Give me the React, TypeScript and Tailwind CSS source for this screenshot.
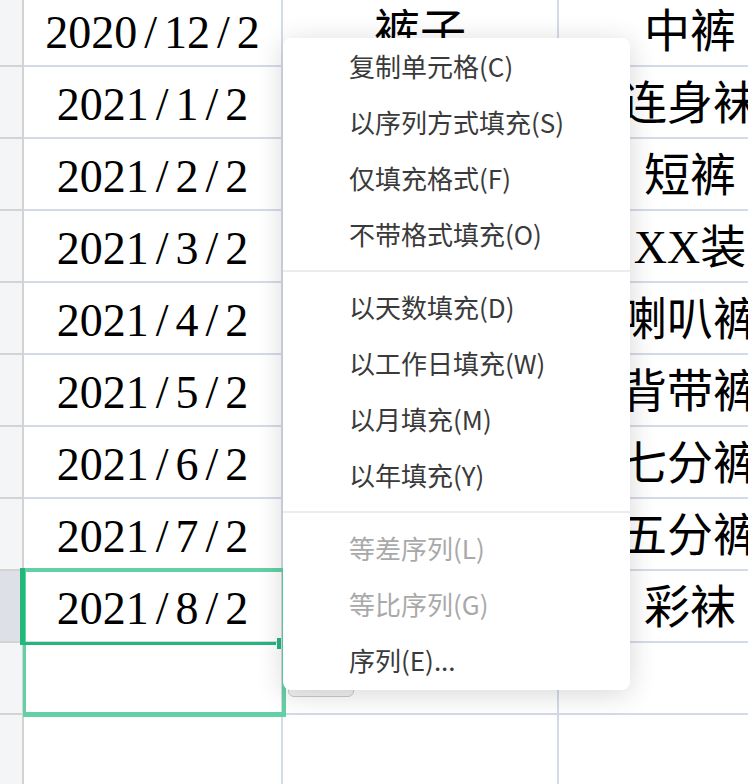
const rows = [
  ['2020/12/2', '裤子', '中裤'],
  ['2021/1/2', '', '连身袜'],
  ['2021/2/2', '', '短裤'],
  ['2021/3/2', '', 'XX装'],
  ['2021/4/2', '', '喇叭裤'],
  ['2021/5/2', '', '背带裤'],
  ['2021/6/2', '', '七分裤'],
  ['2021/7/2', '', '五分裤'],
  ['2021/8/2', '', '彩袜'],
  ['', '', ''],
  ['', '', ''],
]

const menu = [
  [
    { label: '复制单元格(C)' },
    { label: '以序列方式填充(S)' },
    { label: '仅填充格式(F)' },
    { label: '不带格式填充(O)' },
  ],
  [
    { label: '以天数填充(D)' },
    { label: '以工作日填充(W)' },
    { label: '以月填充(M)' },
    { label: '以年填充(Y)' },
  ],
  [
    { label: '等差序列(L)', disabled: true },
    { label: '等比序列(G)', disabled: true },
    { label: '序列(E)...' },
  ],
]

function DateText({ value }: { value: string }) {
  const parts = value.split('/')
  return (
    <span>
      {parts.map((p, i) => (
        <span key={i}>
          {i > 0 && <span className="px-[7px]">/</span>}
          {p}
        </span>
      ))}
    </span>
  )
}

function App() {
  return (
    <div className="relative h-[784px] w-[748px] overflow-hidden bg-white">
      {/* Sheet grid */}
      <div className="-mt-[5px] w-[821px] font-['Liberation_Serif','Noto_Sans_CJK_SC',serif] text-[46px] text-black">
        {rows.map((r, i) => (
          <div key={i} className="flex h-[72px]">
            <div
              className={`w-[24px] shrink-0 border-r-2 border-b-2 border-[#d3d3d3] ${
                i === 8 ? 'bg-[#dde0e7]' : 'bg-[#f4f5f7]'
              }`}
            />
            <div className="flex w-[259px] shrink-0 items-center justify-center border-r-2 border-b-2 border-[#d4dbe8] pt-[4px]">
              {r[0] && <DateText value={r[0]} />}
            </div>
            <div className="flex w-[276px] shrink-0 items-center justify-center border-r-2 border-b-2 border-[#d4dbe8] pt-[3px]">
              {r[1]}
            </div>
            <div className="flex w-[262px] shrink-0 items-center justify-center whitespace-nowrap border-b-2 border-[#d4dbe8] pt-[3px]">
              {r[2]}
            </div>
          </div>
        ))}
      </div>

      {/* Fill range and selected cell */}
      <div className="absolute left-[23px] top-[568px] h-[149px] w-[263px] border-t-[4px] border-r-[4px] border-b-[5px] border-l-[3px] border-[#63d0a5]" />
      <div className="absolute left-[20px] top-[568px] h-[77px] w-[5px] bg-[#22b87c]" />
      <div className="absolute left-[24px] top-[642px] h-[3px] w-[252px] bg-[#22b87c]" />
      <div className="absolute left-[277px] top-[638px] h-[11px] w-[4px] bg-[#22b87c]" />

      {/* Auto fill options button, mostly under the menu */}
      <div className="absolute left-[288px] top-[655px] h-[42px] w-[66px] rounded-[6px] border border-[#c9c9c9] bg-[#f2f2f2]" />

      {/* Context menu */}
      <div className="absolute left-[283px] top-[38px] w-[347px] rounded-[8px] bg-white pt-[2px] font-['Noto_Sans_CJK_SC',sans-serif] text-[26px] shadow-[0_4px_28px_rgba(0,0,0,0.16)]">
        {menu.map((group, gi) => (
          <div key={gi}>
            {gi > 0 && <div className="mt-[6px] mb-[9px] h-[2px] bg-[#ececec]" />}
            {group.map((item) => (
              <div
                key={item.label}
                className={`flex h-[56px] items-center pl-[66px] pb-[4px] leading-none ${
                  item.disabled ? 'text-[#a9a9a9]' : 'text-[#3a3a3a]'
                }`}
              >
                {item.label}
              </div>
            ))}
          </div>
        ))}
      </div>
    </div>
  )
}

export default App
